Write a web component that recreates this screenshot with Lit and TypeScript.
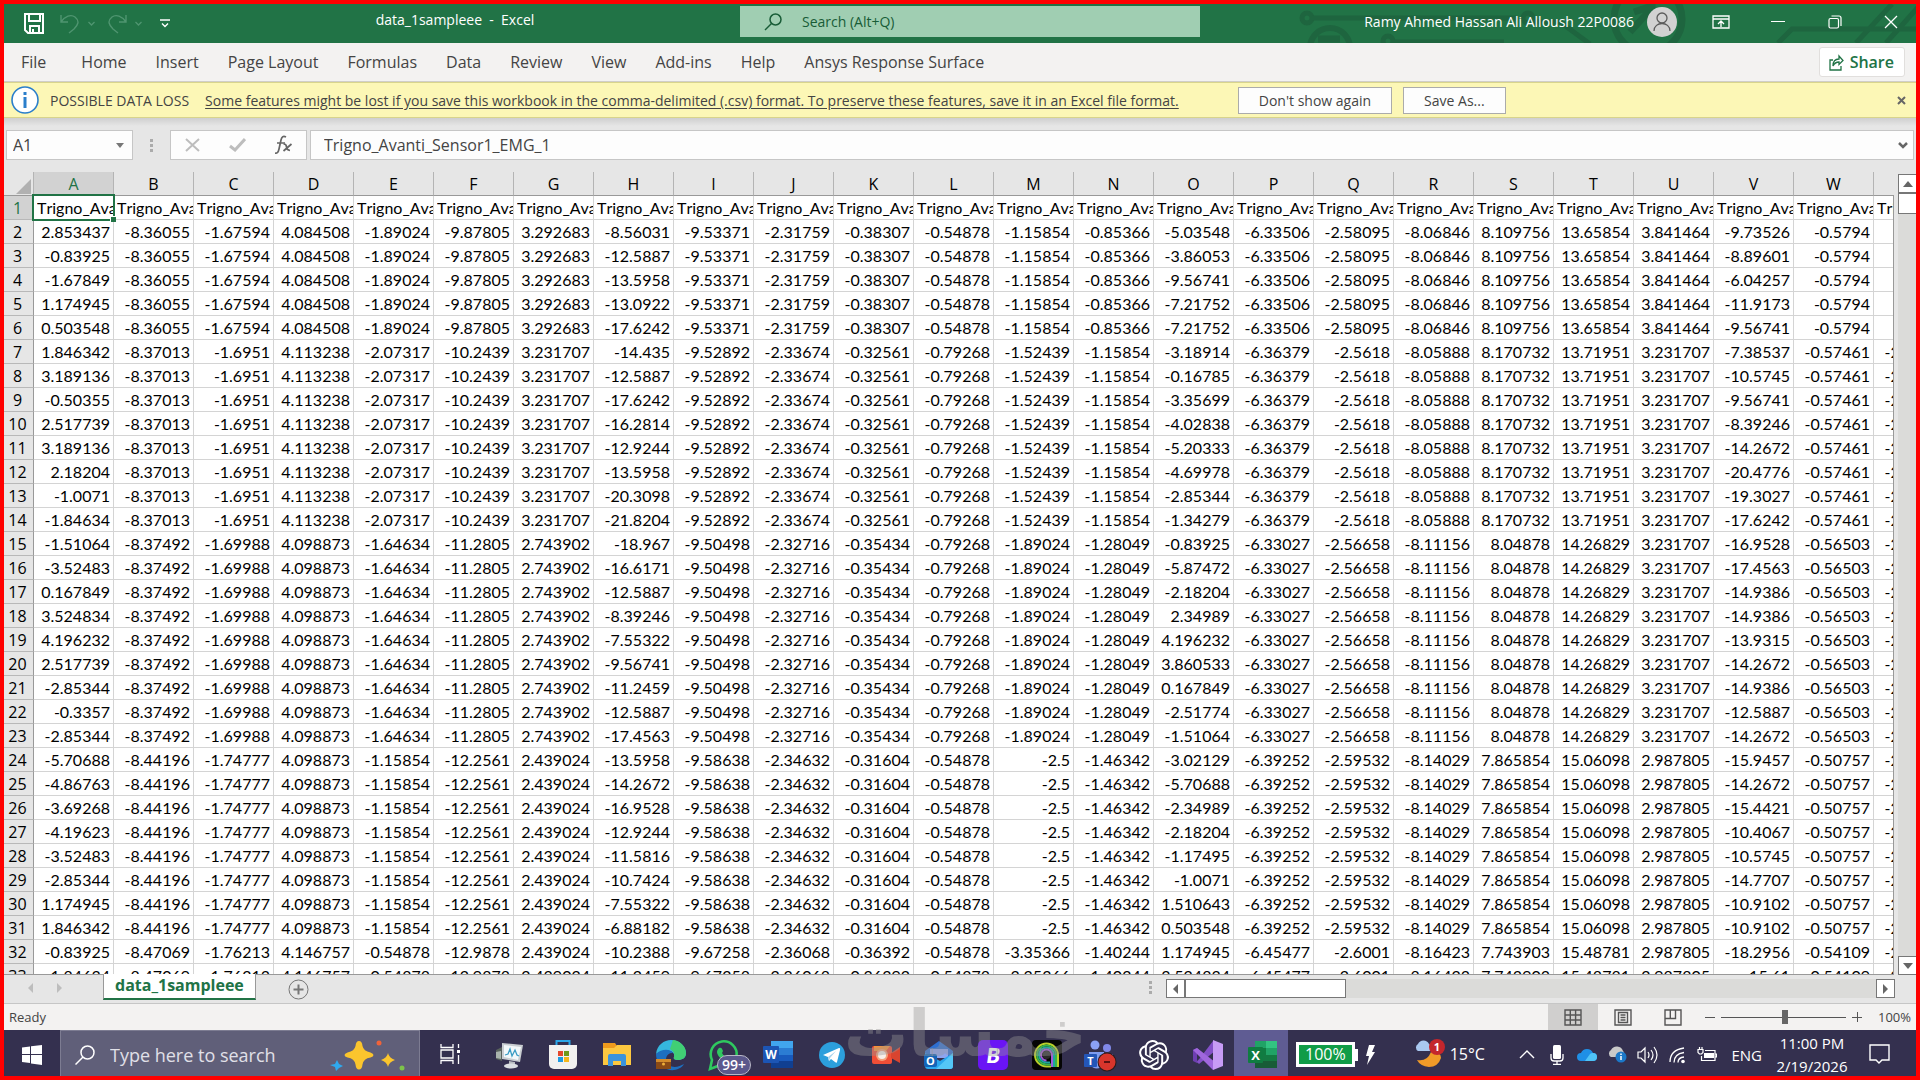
import { LitElement, html, css, svg, nothing } from "lit";
import { customElement } from "lit/decorators.js";
import { classMap } from "lit/directives/class-map.js";

/* ------------------------------------------------------------------ data */

const COLUMNS = "ABCDEFGHIJKLMNOPQRSTUVWX".split("");

/* Channels sampled slowly: one value per block of rows, by column letter. */
interface Block {
  rows: number;
  values: Record<string, string>;
}

const block = (rows: number, letters: string, values: string): Block => {
  const list = values.split(" ");
  return {
    rows,
    values: Object.fromEntries(letters.split("").map((l, i) => [l, list[i]])),
  };
};

const SLOW = "BCDEFGIJKLMNPQRSTUWX";

const BLOCKS: Block[] = [
  block(5, SLOW, "-8.36055 -1.67594 4.084508 -1.89024 -9.87805 3.292683 -9.53371 -2.31759 -0.38307 -0.54878 -1.15854 -0.85366 -6.33506 -2.58095 -8.06846 8.109756 13.65854 3.841464 -0.5794 -2.5"),
  block(8, SLOW, "-8.37013 -1.6951 4.113238 -2.07317 -10.2439 3.231707 -9.52892 -2.33674 -0.32561 -0.79268 -1.52439 -1.15854 -6.36379 -2.5618 -8.05888 8.170732 13.71951 3.231707 -0.57461 -2.56098"),
  block(9, SLOW, "-8.37492 -1.69988 4.098873 -1.64634 -11.2805 2.743902 -9.50498 -2.32716 -0.35434 -0.79268 -1.89024 -1.28049 -6.33027 -2.56658 -8.11156 8.04878 14.26829 3.231707 -0.56503 -2.68293"),
  block(8, SLOW, "-8.44196 -1.74777 4.098873 -1.15854 -12.2561 2.439024 -9.58638 -2.34632 -0.31604 -0.54878 -2.5 -1.46342 -6.39252 -2.59532 -8.14029 7.865854 15.06098 2.987805 -0.50757 -2.74390"),
  block(2, SLOW, "-8.47069 -1.76213 4.146757 -0.54878 -12.9878 2.439024 -9.67258 -2.36068 -0.36392 -0.54878 -3.35366 -1.40244 -6.45477 -2.6001 -8.16423 7.743903 15.48781 2.987805 -0.54109 -2.80488"),
];

/* Channels that change on every row. */
const FAST: Record<string, string[]> = {
  A: "2.853437 -0.83925 -1.67849 1.174945 0.503548 1.846342 3.189136 -0.50355 2.517739 3.189136 2.18204 -1.0071 -1.84634 -1.51064 -3.52483 0.167849 3.524834 4.196232 2.517739 -2.85344 -0.3357 -2.85344 -5.70688 -4.86763 -3.69268 -4.19623 -3.52483 -2.85344 1.174945 1.846342 -0.83925 -1.84634".split(" "),
  H: "-8.56031 -12.5887 -13.5958 -13.0922 -17.6242 -14.435 -12.5887 -17.6242 -16.2814 -12.9244 -13.5958 -20.3098 -21.8204 -18.967 -16.6171 -12.5887 -8.39246 -7.55322 -9.56741 -11.2459 -12.5887 -17.4563 -13.5958 -14.2672 -16.9528 -12.9244 -11.5816 -10.7424 -7.55322 -6.88182 -10.2388 -11.2459".split(" "),
  O: "-5.03548 -3.86053 -9.56741 -7.21752 -7.21752 -3.18914 -0.16785 -3.35699 -4.02838 -5.20333 -4.69978 -2.85344 -1.34279 -0.83925 -5.87472 -2.18204 2.34989 4.196232 3.860533 0.167849 -2.51774 -1.51064 -3.02129 -5.70688 -2.34989 -2.18204 -1.17495 -1.0071 1.510643 0.503548 1.174945 3.524834".split(" "),
  V: "-9.73526 -8.89601 -6.04257 -11.9173 -9.56741 -7.38537 -10.5745 -9.56741 -8.39246 -14.2672 -20.4776 -19.3027 -17.6242 -16.9528 -17.4563 -14.9386 -14.9386 -13.9315 -14.2672 -14.9386 -12.5887 -14.2672 -15.9457 -14.2672 -15.4421 -10.4067 -10.5745 -14.7707 -10.9102 -10.9102 -18.2956 -15.61".split(" "),
};

const ROWS: string[][] = BLOCKS.flatMap((b) =>
  Array.from({ length: b.rows }, () => b.values),
).map((values, i) => COLUMNS.map((c) => FAST[c]?.[i] ?? values[c]));

const FIELD = "Trigno_Avanti_Sensor1_EMG_1";

const UI = css`
  * {
    box-sizing: border-box;
  }
  button,
  input {
    font: inherit;
    color: inherit;
    margin: 0;
    padding: 0;
    border: 0;
    background: none;
    border-radius: 0;
    outline: none;
  }
  button {
    display: flex;
    align-items: center;
    justify-content: center;
  }
  svg {
    display: block;
    flex: none;
  }
`;

/* ------------------------------------------------------------ title bar */

@customElement("title-bar")
export class TitleBar extends LitElement {
  static styles = [
    UI,
    css`
      :host {
        display: grid;
        grid-template-columns: 1fr 460px 1fr;
        position: relative;
        height: 39px;
        padding-left: 20px;
        background: #217346;
        color: #fff;
        font-size: 14px;
      }
      .pattern {
        position: absolute;
        top: 0;
        right: 0;
      }
      .left {
        display: flex;
        align-items: center;
      }
      .quick {
        display: flex;
        align-items: center;
        gap: 8px;
      }
      .save {
        margin-right: 8px;
      }
      .undo,
      .redo {
        color: #4f9570;
      }
      .redo {
        margin-left: 4px;
      }
      .redo.list {
        margin-left: 0;
      }
      .more {
        margin-left: 10px;
      }
      .name {
        flex: 1;
        margin: 0;
        padding-bottom: 8px;
        text-align: center;
        font-size: 14px;
        font-weight: 400;
        white-space: pre;
      }
      .search {
        display: flex;
        align-items: center;
        gap: 20px;
        height: 31px;
        margin-top: 2px;
        padding-left: 24px;
        background: #a0ceb2;
        color: #185c37;
      }
      .search input {
        flex: 1;
      }
      .search input::placeholder {
        color: #185c37;
        opacity: 1;
      }
      .right {
        display: flex;
        align-items: center;
        justify-content: flex-end;
        position: relative;
        padding-bottom: 4px;
      }
      .account {
        gap: 13px;
        margin-right: 15px;
      }
      .win {
        width: 57px;
        height: 34px;
      }
      .close {
        width: 50px;
        margin-left: 3px;
      }
    `,
  ];

  render() {
    return html`
      <svg class="pattern" width="640" height="39" viewBox="0 0 640 39" fill="none" stroke="#1e653f" stroke-width="5" aria-hidden="true">
        <circle cx="31" cy="14" r="5" /><path d="M36 14H240" />
        <circle cx="54" cy="44" r="20" stroke-width="6" />
        <path d="M42 35h22" stroke-width="7" />
        <circle cx="112" cy="37" r="5" /><path d="M118 38h110" />
        <circle cx="252" cy="14" r="5" /><path d="M256 18h28l30 22" />
        <circle cx="372" cy="15" r="34" stroke-width="7" />
        <path d="M358 8l18-6v20M376 4l-22 24" stroke-width="7" />
        <path d="M502 39l14-14h124M580 39l36-39M610 39l34-38" />
      </svg>
      <div class="left">
        <div class="quick">
          <button class="save" aria-label="Save">
            <svg width="20" height="21" viewBox="0 0 20 21" fill="none" stroke="#fff" stroke-width="2"><path d="M1 1h18v19H4l-3-3zM5 1v7h11V1M6 20v-7h9v7M9 16v4" /></svg>
          </button>
          <button class="undo" aria-label="Undo">
            <svg width="20" height="20" viewBox="0 0 20 20" fill="none" stroke="currentColor" stroke-width="1.4"><path d="M1 1v7h7M1 8C5 2 11 0 15 3c5 4 3 8-1 12l-5 4" /></svg>
          </button>
          <button class="undo" aria-label="Undo list">
            <svg width="7" height="5" viewBox="0 0 7 5" fill="none" stroke="currentColor" stroke-width="1.3"><path d="M.5 1l3 3 3-3" /></svg>
          </button>
          <button class="redo" aria-label="Redo">
            <svg width="20" height="20" viewBox="0 0 20 20" fill="none" stroke="currentColor" stroke-width="1.4"><path d="M19 1v7h-7M19 8C15 2 9 0 5 3 0 7 2 11 6 15l5 4" /></svg>
          </button>
          <button class="redo list" aria-label="Redo list">
            <svg width="7" height="5" viewBox="0 0 7 5" fill="none" stroke="currentColor" stroke-width="1.3"><path d="M.5 1l3 3 3-3" /></svg>
          </button>
          <button class="more" aria-label="Customize toolbar">
            <svg width="10" height="9" viewBox="0 0 10 9" fill="none" stroke="#fff" stroke-width="1.4"><path d="M0 1h10M2 4.500l3 3 3-3" /></svg>
          </button>
        </div>
        <h1 class="name">data_1sampleee  -  Excel</h1>
      </div>
      <label class="search">
        <svg width="18" height="18" viewBox="0 0 18 18" fill="none" stroke="currentColor" stroke-width="1.5"><circle cx="11.500" cy="6.500" r="5.500" /><path d="M7.500 10.500L1 17" /></svg>
        <input type="text" placeholder="Search (Alt+Q)" aria-label="Search" />
      </label>
      <div class="right">
        <button class="account">
          <span>Ramy Ahmed Hassan Ali Alloush 22P0086</span>
          <svg width="30" height="30" viewBox="0 0 30 30"><circle cx="15" cy="15" r="15" fill="#d2d2d2" /><g fill="none" stroke="#5c5c5c" stroke-width="1.3"><circle cx="15" cy="11" r="5" /><path d="M7 24c0-10 16-10 16 0" /></g></svg>
        </button>
        <button class="win" aria-label="Ribbon display options">
          <svg width="18" height="14" viewBox="0 0 18 14" fill="none" stroke="#fff" stroke-width="1.3"><path d="M1 1h16v12H1zM1 4h16M9 12V6M6 9l3-3 3 3" /></svg>
        </button>
        <button class="win" aria-label="Minimize">
          <svg width="14" height="2"><path d="M0 .5h14" stroke="#fff" /></svg>
        </button>
        <button class="win" aria-label="Restore">
          <svg width="14" height="14" viewBox="0 0 14 14" fill="none" stroke="#fff" stroke-width="1.2"><rect x="1" y="3.500" width="9.500" height="9.500" rx="1.500" /><path d="M3.500 1h7.500a2 2 0 0 1 2 2v8" /></svg>
        </button>
        <button class="win close" aria-label="Close">
          <svg width="14" height="14" viewBox="0 0 14 14" stroke="#fff" stroke-width="1.3"><path d="M1 1l12 12M13 1L1 13" /></svg>
        </button>
      </div>
    `;
  }
}

/* ----------------------------------------------------------- sheet grid */

@customElement("sheet-grid")
export class SheetGrid extends LitElement {
  static styles = [
    UI,
    css`
      :host {
        display: grid;
        grid-template-columns: minmax(0, 1fr) 22px;
        min-height: 0;
        background: #e6e6e6;
      }
      .view {
        position: relative;
        overflow: hidden;
        border-bottom: 1px solid #999;
      }
      .edge {
        position: absolute;
        top: 23px;
        right: 0;
        bottom: 0;
        border-right: 1px solid #999;
      }
      table {
        table-layout: fixed;
        width: 1950px;
        border-collapse: separate;
        border-spacing: 0;
        font-family: Lato, "Open Sans", sans-serif;
        font-size: 16px;
        line-height: 23px;
        color: #000;
      }
      th,
      td {
        height: 24px;
        padding: 0;
        font-weight: 400;
        white-space: nowrap;
      }
      th {
        padding-top: 2px;
        font-family: "Open Sans", sans-serif;
        line-height: 21px;
        background: #e6e6e6;
      }
      .num {
        width: 30px;
      }
      .col {
        width: 80px;
      }
      thead th {
        border-bottom: 1px solid #999;
        border-right: 1px solid #b4b4b4;
      }
      .picked {
        background: #d2d2d2;
        color: #217346;
      }
      tbody th {
        padding-right: 2px;
        border-right: 1px solid #999;
        border-bottom: 1px solid #b8b8b8;
      }
      td {
        overflow: hidden;
        padding-right: 3px;
        background: #fff;
        border-right: 1px solid #d4d4d4;
        border-bottom: 1px solid #d4d4d4;
        text-align: right;
      }
      td.text {
        padding: 0 0 0 3px;
        text-align: left;
        font-kerning: none;
      }
      td.active {
        position: relative;
        overflow: visible;
      }
      .clip {
        overflow: hidden;
      }
      .ring {
        position: absolute;
        inset: -2px;
        border: 2px solid #217346;
      }
      .handle {
        position: absolute;
        right: -3px;
        bottom: -3px;
        width: 6px;
        height: 6px;
        border: 1px solid #fff;
        border-width: 1px 0 0 1px;
        background: #217346;
      }
      .corner svg {
        margin: 3px 2px 0 auto;
      }
      .scroll {
        display: flex;
        flex-direction: column;
        padding: 2px 0 0 4px;
      }
      .scroll button {
        height: 19px;
        border: 1px solid #777;
        border-right: 0;
        background: #fff;
      }
      .thumb {
        height: 21px;
        border: 1px solid #777;
        border-right: 0;
        background: #fff;
      }
      .track {
        flex: 1;
        background: #dbdbd9;
      }
    `,
  ];

  render() {
    return html`
      <div class="view">
        <table aria-label="Sheet">
          <thead>
            <tr>
              <th class="num corner">
                <svg width="15" height="15" viewBox="0 0 15 15"><path d="M15 0v15H0z" fill="#b1b1b1" /></svg>
              </th>
              ${COLUMNS.map((c, i) => html`<th scope="col" class=${classMap({ col: true, picked: i === 0 })}>${c}</th>`)}
            </tr>
          </thead>
          <tbody>
            <tr>
              <th scope="row" class="picked">1</th>
              ${COLUMNS.map((_, i) =>
                i === 0
                  ? html`<td class="text active"><div class="clip">${FIELD}</div><div class="ring"></div><div class="handle"></div></td>`
                  : html`<td class="text"><div class="clip">${FIELD}</div></td>`,
              )}
            </tr>
            ${ROWS.map((row, r) => html`<tr><th scope="row">${r + 2}</th>${row.map((v) => html`<td>${v}</td>`)}</tr>`)}
          </tbody>
        </table>
        <div class="edge"></div>
      </div>
      <div class="scroll">
        <button aria-label="Scroll up"><svg width="10" height="6"><path d="M0 6l5-6 5 6z" fill="#666" /></svg></button>
        <div class="thumb"></div>
        <div class="track"></div>
        <button aria-label="Scroll down"><svg width="10" height="6"><path d="M0 0l5 6 5-6z" fill="#666" /></svg></button>
      </div>
    `;
  }
}

/* -------------------------------------------------------------- taskbar */

const letter = (x: number, y: number, size: number, t: string) =>
  svg`<text x=${x} y=${y} font-size=${size} font-weight="700" fill="#fff" text-anchor="middle" font-family="Open Sans, sans-serif">${t}</text>`;

const APPS = [
  {
    name: "Task Manager",
    art: svg`<path d="M2 10l6-3v14l-6-2z" fill="#59625d"/><path d="M2 12l5-1v8l-5-1z" fill="#a9b3ad"/><path d="M8 3l21 2-3 17-18-3z" fill="#c9cdd1"/><path d="M10 5l17 2-3 13-14-3z" fill="#f3f8fa"/><path d="M11 15l3-1 2-5 2 7 3-6 2 5 2 1" fill="none" stroke="#3a9cc4" stroke-width="1.300"/><path d="M15 21l6 1v4h-6z" fill="#b8bcc0"/><ellipse cx="17" cy="26" rx="7" ry="2.500" fill="#dcdfe2"/>`,
  },
  {
    name: "Microsoft Store",
    art: svg`<path d="M8.500 6V1h13v5" fill="none" stroke="#2ba6e8" stroke-width="2"/><path d="M1 5h28v19a5 5 0 0 1-5 5H6a5 5 0 0 1-5-5z" fill="#f2f1f0"/><path d="M10 11h5v5h-5z" fill="#e5482d"/><path d="M16 11h5v5h-5z" fill="#6f9a1a"/><path d="M10 17h5v5h-5z" fill="#1d9be2"/><path d="M16 17h5v5h-5z" fill="#f5b81c"/>`,
  },
  {
    name: "File Explorer",
    art: svg`<path d="M1 3h12l2 3v4H1z" fill="#ee9a1d"/><path d="M1 8h11l3-3h14v20H1z" fill="#fcc740"/><path d="M6 26V16q0-2 2-2h14q2 0 2 2v10h-5v-5h-8v5z" fill="#3b93dc"/>`,
  },
  {
    name: "Microsoft Edge",
    art: svg`<path d="M0 14C1 5 8 0 15 0c9 0 15 7 15 13 0 5-4 7-8 7-3 0-5-1-4-3 2-7-10-9-18-3z" fill="#35b7dd"/><path d="M17 0c8 1 13 7 13 13 0 5-4 7-8 7-3 0-5-1-4-3 1-4-1-6-4-8z" fill="#41cf74"/><path d="M0 14c6-6 15-5 17-1-6-1-10 7-4 12 5 4 11 1 15-1-4 7-15 8-21 3C3 24 0 20 0 14z" fill="#1d6fc0"/><path d="M0 20h15v9H0z" fill="#8a4a16"/><path d="M0 19h15v3H0z" fill="#d28a2a"/><circle cx="7.500" cy="24" r="1.500" fill="#f0b03a"/>`,
  },
  {
    name: "WhatsApp",
    badge: "99+",
    art: svg`<path d="M1 29l2-9A13 13 0 1 1 9 26z" fill="none" stroke="#2fc85f" stroke-width="2.600"/><path d="M10 8c2-1 3 0 4 3l-1 2c1 2 3 4 5 4l2-1 3 2c0 3-4 4-6 3-5-1-9-6-9-9 0-2 1-3 2-4z" fill="#2fc85f"/>`,
  },
  {
    name: "Word",
    art: svg`<path d="M8 1h22v7H8z" fill="#41a5ee"/><path d="M8 8h22v7H8z" fill="#2b7cd3"/><path d="M8 15h22v6H8z" fill="#185abd"/><path d="M8 21h22v7H8z" fill="#103f91"/><rect x="0" y="6" width="16" height="17" rx="1" fill="#1c55b4"/>${letter(8, 19, 12, "W")}`,
  },
  {
    name: "Telegram",
    art: svg`<circle cx="15" cy="15" r="13" fill="#2c9fdc"/><path d="M6 15l16-7c1 0 1 0 1 2l-3 12c0 1-1 1-2 0l-4-3-2 2-1-4z" fill="#fff"/><path d="M11 17l8-6-6 7-1 3z" fill="#a9d3ec"/>`,
  },
  {
    name: "Screen Recorder",
    art: svg`<rect x="1" y="6" width="20" height="18" rx="2" fill="#f04e36"/><path d="M20 13l9-6v16l-9-5z" fill="#d9442f"/><path d="M3 6h16l-4 5H3z" fill="#f6923a"/><circle cx="11" cy="15" r="6" fill="#f3a27c"/><circle cx="11" cy="15" r="4" fill="#f7efe9"/>`,
  },
  {
    name: "Outlook",
    art: svg`<path d="M1 11L15 1l14 10v6H1z" fill="#2f6fd0"/><path d="M6 9h18v9H6z" fill="#8ea4ee"/><path d="M1 13l15 8 13-8v13q0 3-3 3H4q-3 0-3-3z" fill="#2aa7ee"/><path d="M29 13v13q0 3-3 3H12z" fill="#54c6f7"/><rect x="0" y="14" width="13" height="13" rx="2" fill="#1464b8"/>${letter(6.5, 24.5, 11, "O")}`,
  },
  {
    name: "Blackbox",
    art: svg`<rect width="30" height="30" rx="5" fill="#6a14f5"/><g transform="skewX(-8)">${letter(17.5, 22.5, 21, "B")}</g>`,
  },
  {
    name: "Audio Lab",
    art: svg`<rect width="30" height="30" rx="4" fill="#050505"/><g fill="none" stroke-width="2"><path d="M26 27V15a11.500 11.500 0 1 0-11.500 11.500H19" stroke="#b9cf2a"/><path d="M24 27V15a9.500 9.500 0 1 0-9.500 9.500H19" stroke="#38b54a"/><path d="M22 27V15a7.500 7.500 0 1 0-7.500 7.500H18" stroke="#1fa5a0"/><path d="M20 27V15a5.500 5.500 0 1 0-5.500 5.500" stroke="#a05bd8"/></g><circle cx="14.500" cy="15" r="4" fill="#2a2a2a"/>`,
  },
  {
    name: "Teams",
    art: svg`<circle cx="10" cy="5" r="4.500" fill="#8ba1f4"/><circle cx="22" cy="8" r="4" fill="#8088e8"/><path d="M4 12h15v12q-7 9-15 0z" fill="#7f9bf0"/><path d="M19 14h9v6h-9z" fill="#6a70d8"/><rect x="-1" y="14" width="13" height="13" rx="1" fill="#2456b8"/>${letter(5.5, 24.5, 11, "T")}<circle cx="22" cy="22" r="9.500" fill="#2b1a1a"/><circle cx="22" cy="22" r="8.500" fill="#d8352c"/><path d="M19 22h6" stroke="#5c1212" stroke-width="2"/>`,
  },
  {
    name: "ChatGPT",
    art: svg`<g transform="scale(1.25)"><path fill="#fff" d="M22.2819 9.8211a5.9847 5.9847 0 0 0-.5157-4.9108 6.0462 6.0462 0 0 0-6.5098-2.9A6.0651 6.0651 0 0 0 4.9807 4.1818a5.9847 5.9847 0 0 0-3.9977 2.9 6.0462 6.0462 0 0 0 .7427 7.0966 5.98 5.98 0 0 0 .511 4.9107 6.051 6.051 0 0 0 6.5146 2.9001A5.9847 5.9847 0 0 0 13.2599 24a6.0557 6.0557 0 0 0 5.7718-4.2058 5.9894 5.9894 0 0 0 3.9977-2.9001 6.0557 6.0557 0 0 0-.7475-7.0729zm-9.022 12.6081a4.4755 4.4755 0 0 1-2.8764-1.0408l.1419-.0804 4.7783-2.7582a.7948.7948 0 0 0 .3927-.6813v-6.7369l2.02 1.1686a.071.071 0 0 1 .038.052v5.5826a4.504 4.504 0 0 1-4.4945 4.4944zm-9.6607-4.1254a4.4708 4.4708 0 0 1-.5346-3.0137l.142.0852 4.783 2.7582a.7712.7712 0 0 0 .7806 0l5.8428-3.3685v2.3324a.0804.0804 0 0 1-.0332.0615L9.74 19.9502a4.4992 4.4992 0 0 1-6.1408-1.6464zM2.3408 7.8956a4.485 4.485 0 0 1 2.3655-1.9728V11.6a.7664.7664 0 0 0 .3879.6765l5.8144 3.3543-2.0201 1.1685a.0757.0757 0 0 1-.071 0l-4.8303-2.7865A4.504 4.504 0 0 1 2.3408 7.872zm16.5963 3.8558L13.1038 8.364 15.1192 7.2a.0757.0757 0 0 1 .071 0l4.8303 2.7913a4.4944 4.4944 0 0 1-.6765 8.1042v-5.6772a.79.79 0 0 0-.407-.667zm2.0107-3.0231l-.142-.0852-4.7735-2.7818a.7759.7759 0 0 0-.7854 0L9.409 9.2297V6.8974a.0662.0662 0 0 1 .0284-.0615l4.8303-2.7866a4.4992 4.4992 0 0 1 6.6802 4.66zM8.3065 12.863l-2.02-1.1638a.0804.0804 0 0 1-.038-.0567V6.0742a4.4992 4.4992 0 0 1 7.3757-3.4537l-.142.0805L8.704 5.459a.7948.7948 0 0 0-.3927.6813zm1.0976-2.3654l2.602-1.4998 2.6069 1.4998v2.9994l-2.5974 1.4997-2.6067-1.4997Z"/></g>`,
  },
  {
    name: "Visual Studio",
    art: svg`<path d="M0 10l4-2 7 6v4L4 23l-4-2z" fill="#6d3fb0"/><path d="M4 12l6 4-6 5z" fill="#34304f"/><path d="M4 22L20 1l2 6v4L6 24z" fill="#8450c8"/><path d="M0 10l4-2 18 14-2 8z" fill="#a067dd"/><path d="M20 0l10 4v22l-10 4z" fill="#c79bf5"/>`,
  },
  {
    name: "Excel",
    on: true,
    art: svg`<path d="M8 1h11v7H8z" fill="#21a366"/><path d="M19 1h11v7H19z" fill="#33c481"/><path d="M8 8h11v7H8z" fill="#107c41"/><path d="M19 8h11v7H19z" fill="#21a366"/><path d="M8 15h22v6H8z" fill="#147a42"/><path d="M8 21h22v7H8z" fill="#185c37"/><rect x="1" y="7" width="15" height="16" rx="1" fill="#107c41"/>${letter(8.5, 19.5, 13, "X")}`,
  },
];

@customElement("task-bar")
export class TaskBar extends LitElement {
  static styles = [
    UI,
    css`
      :host {
        display: flex;
        position: relative;
        height: 46px;
        background: #34304f;
        color: #fff;
        font-size: 16px;
      }
      .start {
        width: 56px;
        padding-top: 3px;
      }
      .search {
        display: flex;
        align-items: center;
        gap: 15px;
        width: 360px;
        padding: 2px 13px 0 14px;
        background: #605f79;
        border: 1px solid #7d7c92;
        border-bottom: 0;
        color: #e4e4ea;
        font-size: 18px;
      }
      .search input {
        flex: 1;
        min-width: 0;
      }
      .search input::placeholder {
        color: #e0e0e8;
        opacity: 1;
      }
      .view {
        width: 62px;
        padding: 2px 2px 0 0;
      }
      .apps {
        display: flex;
        width: 806px;
      }
      .app {
        flex: 1;
        position: relative;
        padding: 3px 0 0 1px;
      }
      .app svg {
        overflow: visible;
      }
      .on {
        background: #5f5c93;
      }
      .badge {
        position: absolute;
        left: 20px;
        bottom: 1px;
        padding: 0 4px;
        border: 1px solid #b9b8c8;
        border-radius: 10px;
        background: #5b588c;
        font-size: 14px;
        line-height: 18px;
        font-weight: 600;
      }
      .power {
        display: flex;
        align-items: center;
        gap: 8px;
        margin: 3px 38px 0 8px;
      }
      .meter {
        display: flex;
        align-items: center;
      }
      .level {
        height: 25px;
        padding: 0 6px;
        border: 3px solid #fff;
        background: #109c47;
        font-size: 16px;
        line-height: 19px;
      }
      .tip {
        width: 3px;
        height: 12px;
        background: #fff;
      }
      .weather {
        gap: 5px;
        padding-top: 2px;
      }
      .tray {
        display: flex;
        flex: 1;
        justify-content: flex-end;
        align-items: center;
        padding-top: 3px;
      }
      .icon {
        width: 30px;
        height: 40px;
      }
      .lang {
        padding: 0 14px 0 9px;
        font-size: 15px;
      }
      .clock {
        display: block;
        width: 72px;
        font-size: 15px;
        line-height: 23px;
        text-align: center;
        white-space: nowrap;
      }
      .note {
        margin: 0 22px 0 16px;
      }
    `,
  ];

  render() {
    return html`
      <button class="start" aria-label="Start">
        <svg width="20" height="20" viewBox="0 0 20 20" fill="#fff"><path d="M0 2.500l8-1V9H0zM9 1.300L20 0v9H9zM0 10h8v8l-8-1zM9 10h11v10L9 18.500z" /></svg>
      </button>
      <label class="search">
        <svg width="20" height="20" viewBox="0 0 20 20" fill="none" stroke="#fff" stroke-width="1.500"><circle cx="12.500" cy="7.500" r="6.500" /><path d="M8 12l-7.500 7.500" /></svg>
        <input type="text" placeholder="Type here to search" aria-label="Search the computer" />
        <svg width="76" height="32" viewBox="0 0 76 32">
          <path d="M29 2q3 0 3.500 5 1 5 8 6.500 3 1 3 2.500t-3 2.500q-7 1-8 7-.5 5-3.500 5t-3.500-5q-1-6-8-7-3-1-3-2.500t3-2.500q7-1.500 8-6.500.5-5 3.500-5z" fill="#fbc52d" />
          <path d="M58 14q1 5 7 7-6 2-7 7-1-5-7-7 6-2 7-7z" fill="#fbc52d" />
          <path d="M7 21l2 4 4 2-4 2-3 3-1-4-5-2 5-1z" fill="#2fa9ee" />
          <circle cx="49" cy="4" r="2.500" fill="#f0633a" /><circle cx="72" cy="29" r="2.500" fill="#7dc34a" />
        </svg>
      </label>
      <button class="view" aria-label="Task view">
        <svg width="20" height="20" viewBox="0 0 20 20" fill="none" stroke="#fff" stroke-width="1.300"><path d="M1 0v3.500h12V0M1 6h12v8H1zM1 20v-3.500h12V20M18.500 0v4M18.500 11v9" /><path d="M17 6h3v3h-3z" fill="#fff" stroke="none" /></svg>
      </button>
      <nav class="apps" aria-label="Apps">
        ${APPS.map(
          (a) => html`<button class=${classMap({ app: true, on: !!a.on })} aria-label=${a.name}>
            <svg width="30" height="30" viewBox="0 0 30 30">${a.art}</svg>
            ${a.badge ? html`<span class="badge">${a.badge}</span>` : nothing}
          </button>`,
        )}
      </nav>
      <div class="power">
        <div class="meter"><span class="level">100%</span><span class="tip"></span></div>
        <svg width="9" height="20" viewBox="0 0 9 20"><path d="M3 0h6L6 7h3L1 20l2-9H0z" fill="#fff" /></svg>
      </div>
      <button class="weather">
        <svg width="32" height="32" viewBox="0 0 32 32"><path d="M4 22q10 2 14-8 10-1 10 6-3 9-12 9-9-1-12-7z" fill="#f09a28" /><path d="M5 13a4 4 0 0 1 0-7 6 6 0 0 1 11 0 4 4 0 0 1 1 7z" fill="#a9c8f0" /><circle cx="24" cy="9" r="8" fill="#c4262c" />${letter(24, 13, 11, "1")}</svg>
        <span>15°C</span>
      </button>
      <div class="tray">
        <button class="icon" aria-label="Hidden icons"><svg width="16" height="9" viewBox="0 0 16 9" fill="none" stroke="#fff" stroke-width="1.400"><path d="M1 8l7-7 7 7" /></svg></button>
        <button class="icon" aria-label="Microphone"><svg width="26" height="20" viewBox="0 0 26 20"><rect x="9" y="0" width="8" height="14" rx="1.500" fill="#fff" /><path d="M7 9v4q0 3 3 3h6q3 0 3-3V9M13 16v3M9 19.300h8" fill="none" stroke="#fff" stroke-width="1.300" /></svg></button>
        <button class="icon" aria-label="OneDrive"><svg width="20" height="14" viewBox="0 0 20 14"><path d="M4 13a4 4 0 0 1 0-8 6.500 6.500 0 0 1 12 0 4 4 0 0 1 0 8z" fill="#1f8fe6" /><path d="M8 13l5-7a4 4 0 0 1 3-1 4 4 0 0 1 0 8z" fill="#4fc3f7" /></svg></button>
        <button class="icon" aria-label="Cloud sync"><svg width="20" height="17" viewBox="0 0 20 17"><path d="M4 11a4 4 0 0 1 0-7 6.500 6.500 0 0 1 12 1 4 4 0 0 1 0 6z" fill="#c9c9c9" /><circle cx="14" cy="11" r="5.500" fill="#1b78c9" /><path d="M14 10v4M14 7.500v1.500" stroke="#fff" stroke-width="1.500" /></svg></button>
        <button class="icon" aria-label="Volume"><svg width="21" height="18" viewBox="0 0 21 18" fill="none" stroke="#fff" stroke-width="1.200"><path d="M1 6h3l4-4v14l-4-4H1zM11 6q2 3 0 6M14 4q4 5 0 10M17 1q6 8 0 16" /></svg></button>
        <button class="icon" aria-label="Network"><svg width="18" height="18" viewBox="0 0 18 18" fill="none" stroke="#fff" stroke-width="1.300"><path d="M2 16Q2 4 16 2M6 16.500Q6 8 16 6.500M10 16.500q0-5 6-5.500" /><circle cx="15" cy="15.500" r="1.800" fill="#fff" stroke="none" /></svg></button>
        <button class="icon" aria-label="Battery"><svg width="20" height="15" viewBox="0 0 20 15"><path d="M7 6h10v5H7z" fill="#fff" /><path d="M8 3.500h10v10H4.500V9M1 2.500h5v3L4.500 7h-2L1 5.500zM2.500 0v2M5 0v2M18 7h1.500v3H18" fill="none" stroke="#fff" stroke-width="1.200" /></svg></button>
        <button class="lang">ENG</button>
        <button class="clock"><div>11:00 PM</div><div>2/19/2026</div></button>
        <button class="icon note" aria-label="Notifications"><svg width="21" height="21" viewBox="0 0 21 21" fill="none" stroke="#fff" stroke-width="1.400"><path d="M1 1h19v15h-7l-3 3-3-3H1z" /></svg></button>
      </div>
    `;
  }
}

/* ------------------------------------------------------------- app root */

const TABS = ["File", "Home", "Insert", "Page Layout", "Formulas", "Data", "Review", "View", "Add-ins", "Help", "Ansys Response Surface"];

@customElement("app-root")
export class AppRoot extends LitElement {
  static styles = [
    UI,
    css`
      :host {
        display: flex;
        flex-direction: column;
        position: relative;
        height: 100vh;
        box-sizing: border-box;
        overflow: hidden;
        border: 4px solid #f00;
        background: #e6e6e6;
        color: #444;
        font-family: "Open Sans", "Noto Sans", sans-serif;
        font-size: 15px;
      }
      sheet-grid {
        flex: 1;
      }
      .sliver {
        position: absolute;
        top: -4px;
        left: 805px;
        width: 301px;
        height: 1px;
        background: linear-gradient(90deg, #6a6ad0 60px, #26203a 60px);
      }
      .ribbon {
        display: flex;
        align-items: center;
        height: 39px;
        padding: 0 11px 0 17px;
        border-bottom: 1px solid #d0cec8;
        background: #f3f2f1;
      }
      .tabs {
        display: flex;
        gap: 29px;
        flex: 1;
        font-size: 16px;
      }
      .tabs button:first-child {
        margin-right: 6px;
      }
      .share {
        gap: 6px;
        height: 30px;
        padding: 0 10px 0 9px;
        border: 1px solid #e1dfdd;
        border-radius: 3px;
        background: #fff;
        color: #217346;
        font-size: 16px;
        font-weight: 600;
      }
      .notice {
        display: flex;
        align-items: center;
        height: 36px;
        padding: 0 10px 0 7px;
        border: 1px solid #d8d48c;
        border-width: 1px 0;
        background: #fcf7b6;
        font-size: 14px;
        white-space: nowrap;
      }
      .notice strong {
        margin: 0 16px 0 11px;
        font-weight: 400;
      }
      .notice a {
        margin-right: 59px;
        color: inherit;
        text-underline-offset: 2px;
      }
      .notice .act {
        height: 27px;
        margin-right: 11px;
        padding: 0 20px;
        border: 1px solid #ababab;
        background: #fdfdfd;
      }
      .dismiss {
        margin-left: auto;
      }
      .formula {
        display: flex;
        height: 54px;
        padding: 12px 2px 12px 2px;
        background: linear-gradient(#cfcfcf, #e6e6e6 8px);
      }
      .box {
        display: flex;
        align-items: center;
        border: 1px solid #c6c6c6;
        background: #fdfdfd;
      }
      .cellref {
        width: 127px;
        padding: 0 8px 0 6px;
        font-size: 16px;
      }
      .cellref input,
      .entry input {
        flex: 1;
        min-width: 0;
      }
      .grip {
        align-self: center;
        margin: 0 17px;
      }
      .tools {
        gap: 29px;
        width: 137px;
        margin-right: 3px;
        justify-content: center;
      }
      .entry {
        flex: 1;
        padding: 0 5px 0 13px;
        font-size: 16px;
      }
      .sheets {
        display: flex;
        align-items: flex-start;
        position: relative;
        height: 29px;
        padding-right: 21px;
        border-bottom: 1px solid #c6c6c6;
      }
      .sheets .nav {
        height: 26px;
        margin-left: 24px;
      }
      .tab {
        height: 26px;
        margin: -1px 32px 0 41px;
        padding: 0 11px 2px;
        border: 1px solid #999;
        border-width: 0 1px 2px;
        border-bottom-color: #217346;
        background: #fff;
        color: #217346;
        font-size: 16px;
        font-weight: 700;
      }
      .add {
        margin-top: 4px;
      }
      .split {
        margin: 6px 14px 0 auto;
      }
      .hscroll {
        display: flex;
        width: 729px;
        height: 19px;
        margin-top: 4px;
        background: #dbdbd9;
      }
      .hscroll button {
        width: 19px;
        border: 1px solid #777;
        background: #fff;
      }
      .bar {
        width: 161px;
        border: 1px solid #777;
        background: #fff;
      }
      .rest {
        flex: 1;
      }
      .status {
        display: flex;
        align-items: center;
        height: 26px;
        padding: 0 5px;
        background: #f3f2f1;
        font-size: 13px;
      }
      .status span:first-child {
        flex: 1;
      }
      .mode {
        width: 50px;
        height: 26px;
      }
      .mode.on {
        background: #d0cfce;
      }
      .zoom {
        display: flex;
        align-items: center;
        gap: 6px;
        margin: 0 16px 0 7px;
      }
      .zoom input {
        appearance: none;
        width: 125px;
        height: 16px;
        background: linear-gradient(#555, #555) center / 100% 1px no-repeat;
      }
      .zoom input::-webkit-slider-thumb {
        appearance: none;
        width: 6px;
        height: 14px;
        background: #666;
      }
      .mark {
        position: absolute;
        left: 840px;
        bottom: 6px;
        color: rgba(150, 150, 150, 0.4);
        font-family: "DejaVu Sans", sans-serif;
        font-size: 64px;
        font-weight: 700;
        line-height: 72px;
        pointer-events: none;
      }
    `,
  ];

  render() {
    return html`
      <title-bar></title-bar>
      <div class="sliver"></div>
      <div class="ribbon">
        <nav class="tabs" aria-label="Ribbon">${TABS.map((t) => html`<button>${t}</button>`)}</nav>
        <button class="share">
          <svg width="15" height="17" viewBox="0 0 15 17" fill="none" stroke="currentColor" stroke-width="1.300"><path d="M4 6H1v10h11v-4M4 12q0-7 6-7V2l4 4.500-4 4V8q-4 0-6 4z" /></svg>
          Share
        </button>
      </div>
      <div class="notice" role="alert">
        <svg width="28" height="28" viewBox="0 0 28 28"><circle cx="14" cy="14" r="13" fill="#fff" stroke="#2b7fcb" stroke-width="1.600" /><path d="M14 11v11M14 6v3" stroke="#2b7fcb" stroke-width="3" /></svg>
        <strong>POSSIBLE DATA LOSS</strong>
        <a href="#features">Some features might be lost if you save this workbook in the comma-delimited (.csv) format. To preserve these features, save it in an Excel file format.</a>
        <button class="act">Don't show again</button>
        <button class="act">Save As...</button>
        <button class="dismiss" aria-label="Dismiss"><svg width="9" height="9" viewBox="0 0 9 9" stroke="#666" stroke-width="2"><path d="M1 1l7 7M8 1L1 8" /></svg></button>
      </div>
      <div class="formula">
        <label class="box cellref">
          <input type="text" .value=${"A1"} aria-label="Name box" />
          <svg width="8" height="5"><path d="M0 0h8L4 5z" fill="#777" /></svg>
        </label>
        <svg class="grip" width="3" height="13" fill="#ababab"><path d="M0 0h3v3H0zM0 5h3v3H0zM0 10h3v3H0z" /></svg>
        <div class="box tools">
          <button aria-label="Cancel"><svg width="15" height="14" viewBox="0 0 15 14" stroke="#bdbdbd" stroke-width="2"><path d="M1 1l13 12M14 1L1 13" /></svg></button>
          <button aria-label="Enter"><svg width="17" height="14" viewBox="0 0 17 14" fill="none" stroke="#bdbdbd" stroke-width="3"><path d="M1 8l5 4L16 1" /></svg></button>
          <button aria-label="Insert function"><svg width="18" height="20" viewBox="0 0 18 20" fill="none" stroke="#666" stroke-width="1.700"><path d="M0 18q3 1 4-4L6 5q1-5 5-3M2 8h8" /><path d="M8.500 9q3 0 3 3t3.500 3.500M16.500 9L8.500 16" /></svg></button>
        </div>
        <label class="box entry">
          <input type="text" .value=${FIELD} aria-label="Formula bar" />
          <svg width="10" height="7" viewBox="0 0 10 7" fill="none" stroke="#666" stroke-width="2.500"><path d="M1 1l4 4 4-4" /></svg>
        </label>
      </div>
      <sheet-grid></sheet-grid>
      <div class="sheets">
        <button class="nav" aria-label="Previous sheet"><svg width="5" height="10"><path d="M5 0v10L0 5z" fill="#bdbdbd" /></svg></button>
        <button class="nav" aria-label="Next sheet"><svg width="5" height="10"><path d="M0 0v10l5-5z" fill="#bdbdbd" /></svg></button>
        <button class="tab">data_1sampleee</button>
        <button class="add" aria-label="New sheet"><svg width="21" height="21" viewBox="0 0 21 21" fill="none" stroke="#777"><circle cx="10.500" cy="10.500" r="9.500" /><path d="M5.500 10.500h10M10.500 5.500v10" stroke-width="2" /></svg></button>
        <svg class="split" width="3" height="13" fill="#ababab"><path d="M0 0h3v3H0zM0 5h3v3H0zM0 10h3v3H0z" /></svg>
        <div class="hscroll">
          <button aria-label="Scroll left"><svg width="5" height="10"><path d="M5 0v10L0 5z" fill="#666" /></svg></button>
          <div class="bar"></div>
          <div class="rest"></div>
          <button aria-label="Scroll right"><svg width="5" height="10"><path d="M0 0v10l5-5z" fill="#666" /></svg></button>
        </div>
      </div>
      <div class="status">
        <span>Ready</span>
        <button class="mode on" aria-label="Normal view"><svg width="18" height="17" viewBox="0 0 18 17" fill="none" stroke="#555" stroke-width="1.400"><path d="M1 1h16v15H1zM1 6h16M1 11h16M6.300 1v15M11.600 1v15" /></svg></button>
        <button class="mode" aria-label="Page layout view"><svg width="18" height="17" viewBox="0 0 18 17" fill="none" stroke="#555" stroke-width="1.400"><path d="M1 1h16v15H1zM4.500 3.500h9v10h-9zM6.500 6h5M6.500 8.500h5M6.500 11h5" /></svg></button>
        <button class="mode" aria-label="Page break view"><svg width="18" height="17" viewBox="0 0 18 17" fill="none" stroke="#555" stroke-width="1.400"><path d="M1 1h16v15H1zM1 9.500h10.500V1M6.300 1v8" /></svg></button>
        <div class="zoom">
          <button aria-label="Zoom out"><svg width="10" height="10" stroke="#555"><path d="M0 5.500h10" /></svg></button>
          <input type="range" min="0" max="100" .value=${"51"} aria-label="Zoom" />
          <button aria-label="Zoom in"><svg width="10" height="10" stroke="#555"><path d="M0 5.500h10M5.500 0v10" /></svg></button>
        </div>
        <span>100%</span>
      </div>
      <task-bar></task-bar>
      <div class="mark" lang="ar" dir="rtl">خمسات</div>
    `;
  }
}
